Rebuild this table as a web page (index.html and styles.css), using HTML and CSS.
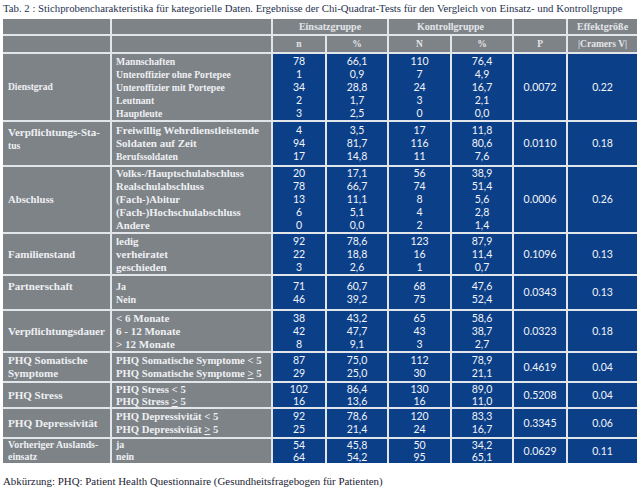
FILE: index.html
```html
<!DOCTYPE html>
<html lang="de">
<head>
<meta charset="utf-8">
<title>Tab. 2</title>
<link rel="stylesheet" href="styles.css">
</head>
<body>
<p class="caption">Tab. 2 : Stichprobencharakteristika für kategorielle Daten. Ergebnisse der Chi-Quadrat-Tests für den Vergleich von Einsatz- und Kontrollgruppe</p>
<table class="tbl">
  <colgroup>
    <col class="c-lab"><col class="c-cat"><col class="c-n"><col class="c-p1"><col class="c-N"><col class="c-p2"><col class="c-P"><col class="c-V">
  </colgroup>
  <thead>
    <tr class="h1">
      <th class="g"></th><th class="g"></th>
      <th class="g" colspan="2">Einsatzgruppe</th>
      <th class="g" colspan="2">Kontrollgruppe</th>
      <th class="g"></th>
      <th class="g">Effektgröße</th>
    </tr>
    <tr class="h2">
      <th class="g"></th><th class="g"></th>
      <th class="g">n</th><th class="g">%</th><th class="g">N</th><th class="g">%</th><th class="g">P</th><th class="g">|Cramers V|</th>
    </tr>
  </thead>
  <tbody>
    <tr class="r-dienst">
      <td class="lab s95">Dienstgrad</td>
      <td class="cat s96">Mannschaften<br>Unteroffizier ohne Portepee<br>Unteroffizier mit Portepee<br>Leutnant<br>Hauptleute</td>
      <td class="num">78<br>1<br>34<br>2<br>3</td>
      <td class="num">66,1<br>0,9<br>28,8<br>1,7<br>2,5</td>
      <td class="num">110<br>7<br>24<br>3<br>0</td>
      <td class="num">76,4<br>4,9<br>16,7<br>2,1<br>0,0</td>
      <td class="num">0.0072</td>
      <td class="num">0.22</td>
    </tr>
    <tr class="r-vs">
      <td class="lab s11 top">Verpflichtungs-Sta-<br><span class="s95">tus</span></td>
      <td class="cat s11">Freiwillig Wehrdienstleistende<br>Soldaten auf Zeit<br><span class="s96">Berufssoldaten</span></td>
      <td class="num">4<br>94<br>17</td>
      <td class="num">3,5<br>81,7<br>14,8</td>
      <td class="num">17<br>116<br>11</td>
      <td class="num">11,8<br>80,6<br>7,6</td>
      <td class="num">0.0110</td>
      <td class="num">0.18</td>
    </tr>
    <tr class="r-abs">
      <td class="lab s105">Abschluss</td>
      <td class="cat s105">Volks-/Hauptschulabschluss<br>Realschulabschluss<br>(Fach-)Abitur<br>(Fach-)Hochschulabschluss<br>Andere</td>
      <td class="num">20<br>78<br>13<br>6<br>0</td>
      <td class="num">17,1<br>66,7<br>11,1<br>5,1<br>0,0</td>
      <td class="num">56<br>74<br>8<br>4<br>2</td>
      <td class="num">38,9<br>51,4<br>5,6<br>2,8<br>1,4</td>
      <td class="num">0.0006</td>
      <td class="num">0.26</td>
    </tr>
    <tr class="r-fam">
      <td class="lab s11">Familienstand</td>
      <td class="cat s11">ledig<br>verheiratet<br>geschieden</td>
      <td class="num">92<br>22<br>3</td>
      <td class="num">78,6<br>18,8<br>2,6</td>
      <td class="num">123<br>16<br>1</td>
      <td class="num">87,9<br>11,4<br>0,7</td>
      <td class="num">0.1096</td>
      <td class="num">0.13</td>
    </tr>
    <tr class="r-part">
      <td class="lab s11 top">Partnerschaft</td>
      <td class="cat s10">Ja<br>Nein</td>
      <td class="num">71<br>46</td>
      <td class="num">60,7<br>39,2</td>
      <td class="num">68<br>75</td>
      <td class="num">47,6<br>52,4</td>
      <td class="num">0.0343</td>
      <td class="num">0.13</td>
    </tr>
    <tr class="r-dauer">
      <td class="lab s11">Verpflichtungsdauer</td>
      <td class="cat s11">&lt; 6 Monate<br>6 - 12 Monate<br>&gt; 12 Monate</td>
      <td class="num">38<br>42<br>8</td>
      <td class="num">43,2<br>47,7<br>9,1</td>
      <td class="num">65<br>43<br>3</td>
      <td class="num">58,6<br>38,7<br>2,7</td>
      <td class="num">0.0323</td>
      <td class="num">0.18</td>
    </tr>
    <tr class="r-som">
      <td class="lab s11">PHQ Somatische<br>Symptome</td>
      <td class="cat s107">PHQ Somatische Symptome &lt; 5<br>PHQ Somatische Symptome <u>&gt;</u> 5</td>
      <td class="num">87<br>29</td>
      <td class="num">75,0<br>25,0</td>
      <td class="num">112<br>30</td>
      <td class="num">78,9<br>21,1</td>
      <td class="num">0.4619</td>
      <td class="num">0.04</td>
    </tr>
    <tr class="r-stress">
      <td class="lab s11">PHQ Stress</td>
      <td class="cat s107">PHQ Stress &lt; 5<br>PHQ Stress <u>&gt;</u> 5</td>
      <td class="num">102<br>16</td>
      <td class="num">86,4<br>13,6</td>
      <td class="num">130<br>16</td>
      <td class="num">89,0<br>11,0</td>
      <td class="num">0.5208</td>
      <td class="num">0.04</td>
    </tr>
    <tr class="r-dep">
      <td class="lab s112">PHQ Depressivität</td>
      <td class="cat s107">PHQ Depressivität &lt; 5<br>PHQ Depressivität <u>&gt;</u> 5</td>
      <td class="num">92<br>25</td>
      <td class="num">78,6<br>21,4</td>
      <td class="num">120<br>24</td>
      <td class="num">83,3<br>16,7</td>
      <td class="num">0.3345</td>
      <td class="num">0.06</td>
    </tr>
    <tr class="r-ausl">
      <td class="lab s99">Vorheriger Auslands-<br>einsatz</td>
      <td class="cat s99">ja<br>nein</td>
      <td class="num">54<br>64</td>
      <td class="num">45,8<br>54,2</td>
      <td class="num">50<br>95</td>
      <td class="num">34,2<br>65,1</td>
      <td class="num">0.0629</td>
      <td class="num">0.11</td>
    </tr>
  </tbody>
</table>
<p class="note">Abkürzung: PHQ: Patient Health Questionnaire (Gesundheitsfragebogen für Patienten)</p>
</body>
</html>
```

FILE: styles.css
```css
html, body {
  margin: 0;
  padding: 0;
  background: #ffffff;
}
body {
  font-family: "Liberation Serif", "Times New Roman", serif;
  color: #1d2b45;
}
.caption {
  margin: 0;
  padding: 2px 0 0 3px;
  height: 15px;
  font-size: 10.75px;
  line-height: 13px;
  white-space: nowrap;
  color: #1f3150;
}
.tbl {
  margin: 2px 0 0 3px;
  width: 634px;
  table-layout: fixed;
  border-collapse: collapse;
  font-family: "Liberation Serif", "Times New Roman", serif;
  font-weight: bold;
  font-size: 9px;
  line-height: 13px;
  color: #eef0f3;
}
.c-lab { width: 108px; }
.c-cat { width: 161px; }
.c-n { width: 54px; }
.c-p1 { width: 62px; }
.c-N { width: 63px; }
.c-p2 { width: 62px; }
.c-P { width: 54px; }
.c-V { width: 70px; }
.tbl th, .tbl td {
  border: 2px solid #e2e6ea;
  padding: 0;
  vertical-align: middle;
}
.tbl tr:first-child th { border-top: none; }
.tbl tr th:first-child, .tbl tr td:first-child { border-left: none; }
.tbl tr th:last-child, .tbl tr td:last-child { border-right: none; }
.tbl tbody tr:last-child td { border-bottom: none; }
.tbl th {
  background: #7e8388;
  font-size: 10px;
  color: #e4e6e8;
  text-align: center;
}
.h1 th { height: 15px; }
.h2 th { height: 16px; font-size: 9.5px; }
.lab, .cat {
  background: #7e8388;
  text-align: left;
  line-height: 13px;
}
.lab { padding-left: 5px !important; }
.cat { padding-left: 4px !important; }
.lab.top { vertical-align: top; padding-top: 4px !important; }
.num {
  background: #0b3f88;
  text-align: center;
  font-family: "Lato", "Open Sans", sans-serif;
  font-weight: normal;
  font-size: 10.5px;
  line-height: 13px;
  color: #f2f4f8;
}
.s95 { font-size: 9.5px; }
.s96 { font-size: 9.7px; }
.s99 { font-size: 9.9px; }
.s10 { font-size: 10px; }
.s105 { font-size: 10.7px; }
.s107 { font-size: 10.7px; }
.s11 { font-size: 11px; }
.s112 { font-size: 11.2px; }
u { text-decoration-thickness: 1px; text-underline-offset: 1px; }
.r-dienst td { height: 66px; }
.r-vs td { height: 39px; }
.r-abs td { height: 65px; }
.r-fam td { height: 40px; }
.r-part td { height: 29px; }
.r-dauer td { height: 40px; }
.r-som td { height: 28px; }
.r-stress td { height: 24px; line-height: 12px; }
.r-dep td { height: 28px; }
.r-ausl td { height: 24px; line-height: 12px; }
.note {
  margin: 0;
  padding: 12px 0 0 3px;
  font-size: 10.9px;
  line-height: 13px;
  color: #1a2233;
}
```
